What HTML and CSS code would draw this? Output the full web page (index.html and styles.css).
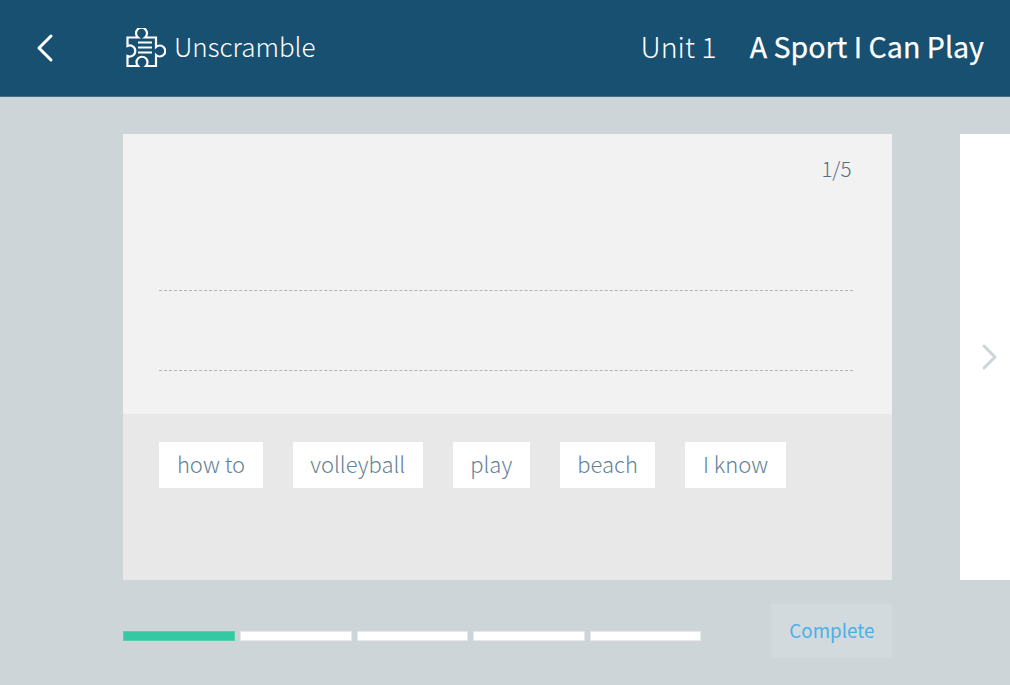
FILE: index.html
```html
<!DOCTYPE html>
<html lang="en">
<head>
<meta charset="utf-8">
<title>Unscramble</title>
<link rel="stylesheet" href="styles.css">
</head>
<body>
<header class="topbar">
  <button class="back" aria-label="Back">
    <svg class="back-icon" viewBox="0 0 20 30"><path d="M16 3 4 15l12 12"/></svg>
  </button>
  <div class="activity">
    <svg class="puzzle" viewBox="0 0 40 40"><path d="M1.5 9.5H12A5.5 5.5 0 1 1 19 9.5H30V19A5.5 5.5 0 1 1 30 27V38H20A5.5 5.5 0 1 0 12 38H1.5V28A5.5 5.5 0 1 0 1.5 18Z"/><path d="M12 14.5H26M12 19.5H26M12 24.5H26"/></svg>
    <span class="activity-name">Unscramble</span>
  </div>
  <div class="lesson">
    <span class="unit">Unit 1</span>
    <span class="lesson-title">A Sport I Can Play</span>
  </div>
</header>
<main class="stage">
  <div class="cards">
    <section class="card">
      <div class="answer">
        <div class="count">1/5</div>
        <div class="line line-first"></div>
        <div class="line line-second"></div>
      </div>
      <div class="tray">
        <span class="chip">how to</span>
        <span class="chip">volleyball</span>
        <span class="chip">play</span>
        <span class="chip">beach</span>
        <span class="chip">I know</span>
      </div>
    </section>
    <aside class="next-card">
      <svg class="next-icon" viewBox="0 0 20 30"><path d="M5 4 16 15 5 26"/></svg>
    </aside>
  </div>
  <div class="footer">
    <div class="progress">
      <span class="seg seg-on"></span>
      <span class="seg"></span>
      <span class="seg"></span>
      <span class="seg"></span>
      <span class="seg"></span>
    </div>
    <button class="complete">Complete</button>
  </div>
</main>
</body>
</html>
```
FILE: styles.css
```css
* { box-sizing: border-box; }
html, body { margin: 0; padding: 0; }
body {
  width: 1010px;
  height: 685px;
  overflow: hidden;
  background: #cdd5d9;
  font-family: "Noto Sans CJK SC", "Noto Sans", sans-serif;
}
.topbar {
  height: 97px;
  display: flex;
  align-items: center;
  background: #175070;
  border-bottom: 1px solid #3f6f8a;
  color: #fff;
  padding: 0 26px 0 35px;
}
.back {
  width: 20px;
  height: 30px;
  padding: 0;
  border: 0;
  background: none;
  display: flex;
}
.back-icon { width: 20px; height: 30px; fill: none; stroke: #fff; stroke-width: 3; stroke-linecap: round; stroke-linejoin: round; }
.activity {
  margin-left: 71px;
  display: flex;
  align-items: center;
  gap: 8px;
}
.puzzle { width: 40px; height: 40px; fill: none; stroke: #fff; stroke-width: 2.2; }
.activity-name { font-size: 26px; font-weight: 300; line-height: 40px; padding-bottom: 4px; }
.lesson { margin-left: auto; display: flex; align-items: center; gap: 33px; font-size: 28.6px; line-height: 40px; padding-bottom: 4px; }
.unit { font-weight: 300; }
.lesson-title { font-weight: 400; -webkit-text-stroke: 0.25px #fff; }
.stage { padding: 37px 0 0 123.4px; }
.cards { display: flex; gap: 68px; height: 446px; }
.card { width: 769px; display: flex; flex-direction: column; }
.answer {
  height: 280px;
  background: #f2f2f2;
  padding: 19px 39px 0 36px;
}
.count { text-align: right; font-size: 20.5px; font-weight: 300; line-height: 30px; color: #557082; padding-right: 2px; }
.line { border-top: 1px dashed #b3b3b3; }
.line-first { margin-top: 107px; }
.line-second { margin-top: 79px; }
.tray {
  flex: 1;
  background: #e8e8e8;
  padding: 28px 36px;
  display: flex;
  align-items: flex-start;
  gap: 30px;
}
.chip {
  height: 46px;
  padding: 0 17.5px;
  background: #fff;
  color: #648296;
  font-size: 22px;
  font-weight: 300;
  line-height: 42px;
}
.next-card {
  flex: 1;
  background: #fff;
  display: flex;
  align-items: center;
  padding-left: 19px;
}
.next-icon { width: 20px; height: 30px; fill: none; stroke: #cdd5d9; stroke-width: 3; stroke-linecap: round; stroke-linejoin: round; }
.footer {
  width: 769px;
  margin-top: 24px;
  display: flex;
  align-items: center;
  justify-content: space-between;
}
.progress { display: flex; gap: 5px; width: 578px; padding-top: 10px; }
.seg { flex: 1; height: 10px; background: #fff; border: 1px solid #e8e8e8; }
.seg-on { background: #32c9a3; border-color: #5ccdb2; }
.complete {
  width: 121px;
  height: 54px;
  padding: 0 0 4px;
  border: 0;
  background: #d2dadd;
  color: #4cb0e8;
  font-family: inherit;
  font-size: 18.8px;
  font-weight: 400;
}
```
